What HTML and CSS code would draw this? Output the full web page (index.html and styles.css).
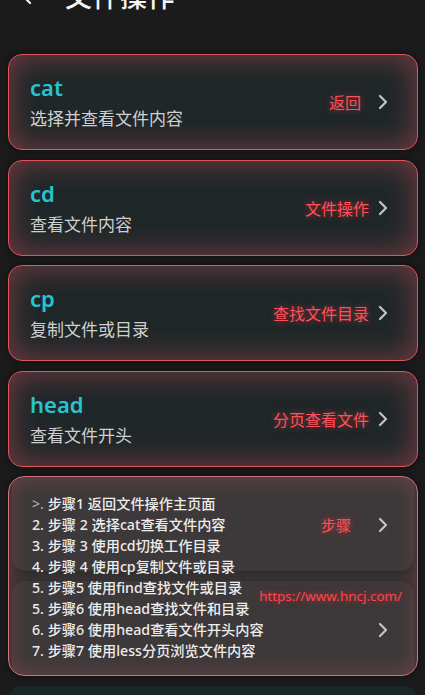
FILE: index.html
```html
<!DOCTYPE html>
<html lang="zh">
<head>
<meta charset="utf-8">
<title>文件操作</title>
<link rel="stylesheet" href="styles.css">
</head>
<body>
<div class="page">
  <header class="header">
    <svg class="back" viewBox="0 0 12 20" width="12" height="20"><path d="M10 2 L2 10 L10 18" fill="none" stroke="#f2f2f2" stroke-width="2.2" stroke-linecap="round" stroke-linejoin="round"/></svg>
    <h1 class="title">文件操作</h1>
  </header>

  <main class="list">
    <section class="card">
      <div class="card-text">
        <div class="cmd">cat</div>
        <div class="desc">选择并查看文件内容</div>
      </div>
      <div class="action"><span class="label label-short">返回</span><svg class="chev" viewBox="0 0 10 16" width="10" height="16"><path d="M2 2 L8 8 L2 14" fill="none" stroke="#c4c4c4" stroke-width="2.2" stroke-linecap="round" stroke-linejoin="round"/></svg></div>
    </section>
    <section class="card">
      <div class="card-text">
        <div class="cmd">cd</div>
        <div class="desc">查看文件内容</div>
      </div>
      <div class="action"><span class="label">文件操作</span><svg class="chev" viewBox="0 0 10 16" width="10" height="16"><path d="M2 2 L8 8 L2 14" fill="none" stroke="#c4c4c4" stroke-width="2.2" stroke-linecap="round" stroke-linejoin="round"/></svg></div>
    </section>
    <section class="card">
      <div class="card-text">
        <div class="cmd">cp</div>
        <div class="desc">复制文件或目录</div>
      </div>
      <div class="action"><span class="label">查找文件目录</span><svg class="chev" viewBox="0 0 10 16" width="10" height="16"><path d="M2 2 L8 8 L2 14" fill="none" stroke="#c4c4c4" stroke-width="2.2" stroke-linecap="round" stroke-linejoin="round"/></svg></div>
    </section>
    <section class="card">
      <div class="card-text">
        <div class="cmd">head</div>
        <div class="desc">查看文件开头</div>
      </div>
      <div class="action"><span class="label">分页查看文件</span><svg class="chev" viewBox="0 0 10 16" width="10" height="16"><path d="M2 2 L8 8 L2 14" fill="none" stroke="#c4c4c4" stroke-width="2.2" stroke-linecap="round" stroke-linejoin="round"/></svg></div>
    </section>

    <section class="steps">
      <div class="panel panel-top"></div>
      <div class="panel panel-bottom"></div>
      <div class="step r1"><span class="mark">&gt;.</span> 步骤1 返回文件操作主页面</div>
      <div class="step r2">2. 步骤 2 选择cat查看文件内容</div>
      <div class="step r3">3. 步骤 3 使用cd切换工作目录</div>
      <div class="step r4">4. 步骤 4 使用cp复制文件或目录</div>
      <div class="step r5">5. 步骤5 使用find查找文件或目录</div>
      <div class="step r6">5. 步骤6 使用head查找文件和目录</div>
      <div class="step r7">6. 步骤6 使用head查看文件开头内容</div>
      <div class="step r8">7. 步骤7 使用less分页浏览文件内容</div>
      <span class="step-label">步骤</span>
      <svg class="chev chev-a" viewBox="0 0 10 16" width="10" height="16"><path d="M2 2 L8 8 L2 14" fill="none" stroke="#c4c4c4" stroke-width="2.2" stroke-linecap="round" stroke-linejoin="round"/></svg>
      <span class="url">https://www.hncj.com/</span>
      <svg class="chev chev-b" viewBox="0 0 10 16" width="10" height="16"><path d="M2 2 L8 8 L2 14" fill="none" stroke="#c4c4c4" stroke-width="2.2" stroke-linecap="round" stroke-linejoin="round"/></svg>
    </section>

    <section class="peek"></section>
  </main>
</div>
</body>
</html>
```

FILE: styles.css
```css
* { box-sizing: border-box; }

html, body {
  margin: 0;
  padding: 0;
  background: #1b1b1c;
}

body {
  font-family: "Noto Sans", "Noto Sans CJK SC", sans-serif;
  color: #e6e6e6;
  overflow: hidden;
  height: 695px;
}

.page {
  display: flex;
  flex-direction: column;
}

.header {
  height: 30px;
  margin-top: -19px;
  display: flex;
  align-items: center;
  padding-left: 20px;
}

.back {
  display: block;
  margin-top: -2px;
}

.title {
  margin: 0 0 0 33px;
  font-family: "Noto Sans CJK SC", sans-serif;
  font-size: 27px;
  font-weight: 500;
  line-height: 30px;
  color: #f4f4f4;
  letter-spacing: 0.5px;
}

.list {
  display: flex;
  flex-direction: column;
  gap: 9.5px;
  padding: 0 7px 0 8px;
  margin-top: 43px;
}

.card {
  height: 96px;
  flex: none;
  border: 1.5px solid #e0545c;
  border-radius: 14px;
  background: #1f2729;
  box-shadow:
    inset 0 0 28px 3px rgba(205, 80, 90, 0.45),
    0 0 6px rgba(0, 0, 0, 0.5);
  display: flex;
  align-items: center;
  justify-content: space-between;
  padding: 0 29px 0 21px;
}

.card-text {
  display: flex;
  flex-direction: column;
  gap: 5px;
  margin-top: -1px;
}

.cmd {
  font-family: "Noto Sans", sans-serif;
  font-size: 22px;
  font-weight: 600;
  line-height: 28px;
  color: #27c4cf;
}

.desc {
  font-family: "Noto Sans CJK SC", sans-serif;
  font-size: 17px;
  line-height: 24px;
  color: #cfcfcf;
}

.action {
  display: flex;
  align-items: center;
  gap: 9px;
}

.label {
  font-family: "Noto Sans CJK SC", sans-serif;
  font-size: 16px;
  font-weight: 400;
  color: #ff4f58;
  text-shadow: 0 0 6px rgba(255, 60, 70, 0.55);
}

.label-short {
  margin-right: 8px;
}

.chev {
  display: block;
}

.steps {
  position: relative;
  height: 200px;
  flex: none;
  border: 1.5px solid #c9737b;
  border-radius: 16px;
  background: #363132;
  box-shadow:
    inset 0 0 22px 2px rgba(180, 80, 90, 0.35),
    0 0 6px rgba(0, 0, 0, 0.5);
  display: grid;
  grid-template-columns: 1fr auto 10px;
  grid-template-rows: repeat(8, 21px);
  column-gap: 0;
  padding: 16px 29px 0 23px;
  align-items: center;
  overflow: hidden;
}

.panel {
  position: absolute;
  left: 3px;
  right: 3px;
  background: rgba(255, 255, 255, 0.035);
  box-shadow: 0 2px 4px rgba(0, 0, 0, 0.12);
}

.panel-top {
  top: 0;
  height: 94px;
  border-radius: 0 0 14px 14px;
}

.panel-bottom {
  top: 104px;
  bottom: 0;
  border-radius: 14px 14px 0 0;
}

.step {
  position: relative;
  grid-column: 1;
  font-family: "Noto Sans", "Noto Sans CJK SC", sans-serif;
  font-size: 14.2px;
  font-weight: 500;
  line-height: 21px;
  color: #ececec;
  white-space: nowrap;
}

.mark { color: #a8a8a8; }

.r1 { grid-row: 1; }
.r2 { grid-row: 2; }
.r3 { grid-row: 3; }
.r4 { grid-row: 4; }
.r5 { grid-row: 5; }
.r6 { grid-row: 6; }
.r7 { grid-row: 7; }
.r8 { grid-row: 8; }

.step-label {
  position: relative;
  grid-column: 2;
  grid-row: 2;
  margin-right: 27px;
  font-family: "Noto Sans CJK SC", sans-serif;
  font-size: 15px;
  font-weight: 400;
  color: #ff4f58;
  text-shadow: 0 0 7px rgba(255, 60, 70, 0.6);
}

.chev-a {
  position: relative;
  grid-column: 3;
  grid-row: 2;
}

.url {
  position: relative;
  grid-column: 1 / 4;
  grid-row: 5 / 7;
  justify-self: end;
  margin-right: -14px;
  margin-top: -4px;
  font-family: "Noto Sans", sans-serif;
  font-size: 13.4px;
  font-weight: 400;
  color: #ff4550;
  text-shadow: 0 0 7px rgba(255, 50, 60, 0.65);
  white-space: nowrap;
}

.chev-b {
  position: relative;
  grid-column: 3;
  grid-row: 7;
}

.peek {
  height: 40px;
  flex: none;
  border-radius: 14px;
  background: #1a2727;
}
```
